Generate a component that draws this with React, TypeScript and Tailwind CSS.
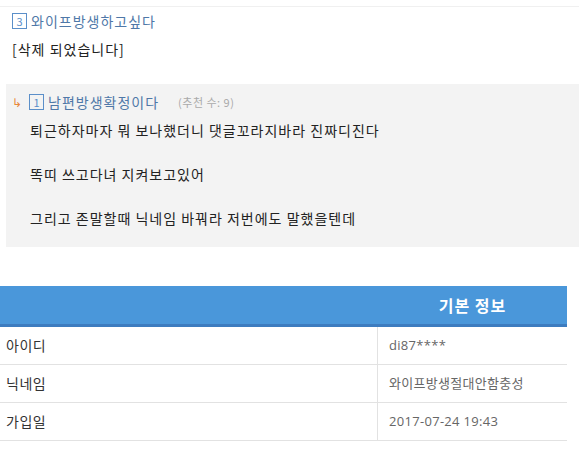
const font = { fontFamily: '"Malgun Gothic", "Noto Sans CJK KR", sans-serif' }
const valueFont = { fontFamily: '"Open Sans", "Noto Sans CJK KR", sans-serif' }

function Badge({ n }: { n: number }) {
  return (
    <span className="inline-flex h-[16px] w-[15px] items-center justify-center border border-[#5b8fc9] text-[11px] leading-none text-[#5b8fc9]">
      {n}
    </span>
  )
}

const rows = [
  { label: "아이디", value: "di87****" },
  { label: "닉네임", value: "와이프방생절대안함충성" },
  { label: "가입일", value: "2017-07-24 19:43" },
]

export default function App() {
  return (
    <div className="h-[451px] w-[579px] overflow-hidden bg-white" style={font}>
      {/* deleted comment */}
      <div className="mt-[6px] border-t border-[#f0f0f0] px-[12px] pt-[6px]">
        <div className="flex h-[16px] items-center gap-[4px]">
          <Badge n={3} />
          <span className="text-[14px] leading-none tracking-[1px] text-[#4f78a8]">와이프방생하고싶다</span>
        </div>
        <p className="mt-[10px] text-[14px] leading-[20px] tracking-[1px] text-[#222]">[삭제 되었습니다]</p>
      </div>

      {/* reply */}
      <div className="ml-[6px] mt-[25px] h-[163px] bg-[#f3f3f3] pl-[6px] pt-[10px]">
        <div className="flex h-[16px] items-center">
          <span className="w-[17px] text-[12px] leading-none text-[#e8883a]">↳</span>
          <Badge n={1} />
          <span className="ml-[4px] text-[14px] leading-none tracking-[1px] text-[#4f78a8]">남편방생확정이다</span>
          <span className="ml-[19px] text-[11px] leading-none tracking-[0.5px] text-[#aaa]">(추천 수: 9)</span>
        </div>
        <div className="mt-[9px] pl-[18px] text-[14px] leading-[22px] tracking-[1px] text-[#222]">
          <p>퇴근하자마자 뭐 보나했더니 댓글꼬라지바라 진짜디진다</p>
          <p>&nbsp;</p>
          <p>똑띠 쓰고다녀 지켜보고있어</p>
          <p>&nbsp;</p>
          <p>그리고 존말할때 닉네임 바꿔라 저번에도 말했을텐데</p>
        </div>
      </div>

      {/* info table */}
      <div className="mt-[39px] w-[567px]">
        <div className="flex h-[41px] border-b-[3px] border-[#3d7cbf] bg-[#4a97da]">
          <div className="w-[378px]" />
          <div className="flex flex-1 items-center justify-center text-[16px] font-bold tracking-[1px] text-white">
            기본 정보
          </div>
        </div>
        {rows.map((r) => (
          <div key={r.label} className="flex h-[38px] border-b border-[#e2e2e2]">
            <div className="flex w-[378px] items-center border-r border-[#e2e2e2] pl-[6px] text-[14px] tracking-[0.5px] text-[#333]">
              {r.label}
            </div>
            <div
              className="flex flex-1 items-center pl-[11px] text-[13px] tracking-[0.3px] text-[#666]"
              style={valueFont}
            >
              {r.value}
            </div>
          </div>
        ))}
      </div>
    </div>
  )
}
